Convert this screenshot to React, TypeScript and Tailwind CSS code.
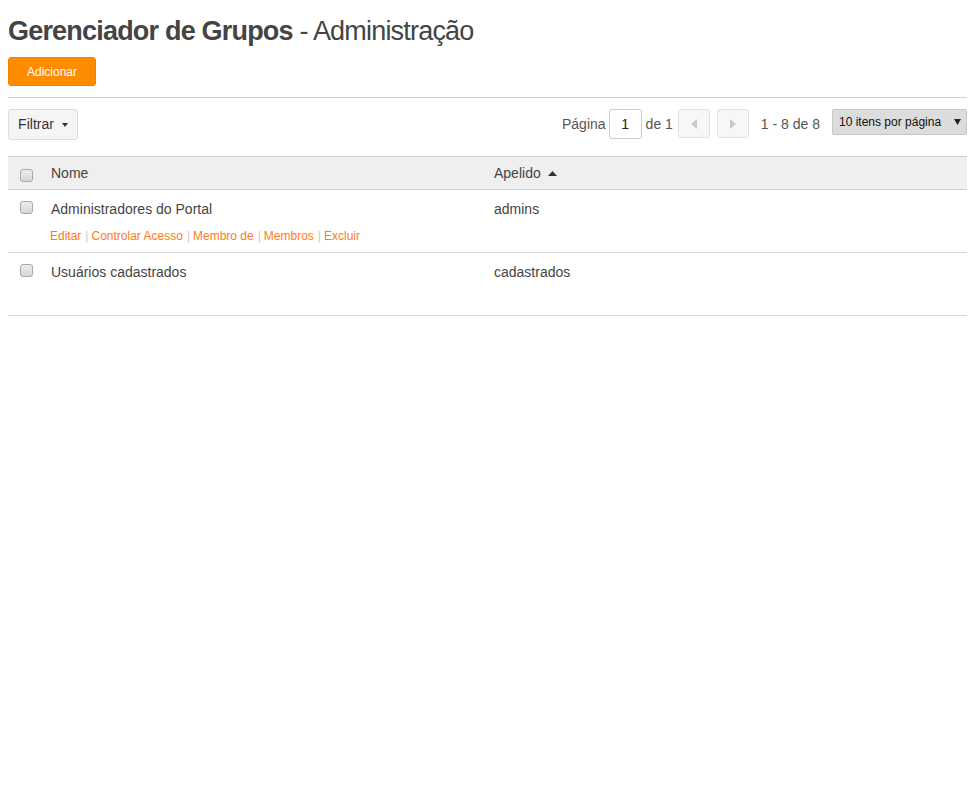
const groups = [
  { name: "Administradores do Portal", alias: "admins", actions: true },
  { name: "Usuários cadastrados", alias: "cadastrados", actions: false },
];

const actions = ["Editar", "Controlar Acesso", "Membro de", "Membros", "Excluir"];

function Checkbox({ className = "" }: { className?: string }) {
  return (
    <span
      className={`block h-[13px] w-[13px] rounded-[3px] border border-[#a9a9a9] bg-gradient-to-b from-[#ececec] to-[#d6d6d6] ${className}`}
    />
  );
}

function Caret({ dir }: { dir: "left" | "right" }) {
  return (
    <svg width="6" height="10" viewBox="0 0 6 10" className="fill-[#c8c8c8]">
      {dir === "left" ? <path d="M6 0 L0 5 L6 10 Z" /> : <path d="M0 0 L6 5 L0 10 Z" />}
    </svg>
  );
}

export default function App() {
  return (
    <div className="min-h-screen bg-white px-2 font-['Liberation_Sans',Arial,sans-serif] text-[#444]">
      <h1 className="pt-[15px] text-[27px] leading-[32px] tracking-[-0.8px] text-[#444]">
        <span className="font-bold">Gerenciador de Grupos</span> - Administração
      </h1>

      <button
        type="button"
        className="mt-[10px] h-[29px] w-[88px] rounded-[3px] border border-[#f08300] bg-[#ff8c00] text-[12px] text-white"
      >
        Adicionar
      </button>

      <div className="mt-[11px] border-t border-[#d0d0d0]" />

      <div className="mt-[11px] flex items-start justify-between">
        <button
          type="button"
          className="flex h-[31px] w-[70px] items-center justify-center gap-[8px] rounded-[3px] border border-[#dcdcdc] bg-[#f5f5f5] text-[14px] text-[#333]"
        >
          Filtrar
          <svg width="6" height="4" viewBox="0 0 6 4" className="fill-[#333]">
            <path d="M0 0 H6 L3 4 Z" />
          </svg>
        </button>

        <div className="flex items-start text-[14px] text-[#555]">
          <span className="mr-[3px] leading-[30px]">Página</span>
          <span className="flex h-[30px] w-[33px] items-center justify-center rounded-[3px] border border-[#ccc] text-[14px] text-[#222]">
            1
          </span>
          <span className="ml-[4px] leading-[30px]">de 1</span>
          <span className="ml-[5px] flex h-[29px] w-[32px] items-center justify-center rounded-[3px] border border-[#e2e2e2] bg-[#f7f7f7]">
            <Caret dir="left" />
          </span>
          <span className="ml-[7px] flex h-[29px] w-[32px] items-center justify-center rounded-[3px] border border-[#e2e2e2] bg-[#f7f7f7]">
            <Caret dir="right" />
          </span>
          <span className="ml-[12px] leading-[30px]">1 - 8 de 8</span>
          <span className="ml-[12px] flex h-[26px] w-[135px] items-center justify-between rounded-[2px] border border-[#c8c8c8] bg-[#dcdcdc] pl-[6px] pr-[5px] text-[12px] text-[#111]">
            10 itens por página
            <svg width="7" height="6" viewBox="0 0 7 6" className="fill-[#222]">
              <path d="M0 0 H7 L3.5 6 Z" />
            </svg>
          </span>
        </div>
      </div>

      <div className="mt-[16px] text-[14px] text-[#444]">
        <div className="flex h-[34px] items-center border-y border-[#cfcfcf] bg-[#efefef]">
          <div className="w-[43px] pl-[12px] pt-[4px]">
            <Checkbox />
          </div>
          <div className="w-[443px]">Nome</div>
          <div className="flex items-center gap-[7px]">
            Apelido
            <svg width="9" height="5" viewBox="0 0 9 5" className="fill-[#333]">
              <path d="M0 5 L4.5 0 L9 5 Z" />
            </svg>
          </div>
        </div>

        {groups.map((g) => (
          <div key={g.alias} className="flex h-[63px] border-b border-[#d6d6d6]">
            <div className="w-[43px] pl-[12px] pt-[11px]">
              <Checkbox />
            </div>
            <div className="w-[443px] pt-[11px]">
              <div className="leading-[17px]">{g.name}</div>
              {g.actions && (
                <div className="-ml-[1px] mt-[11px] flex text-[12px] leading-[14px] text-[#ff7a1a]">
                  {actions.map((a, i) => (
                    <span key={a} className="flex">
                      {i > 0 && <span className="ml-[4px] mr-[3px] text-[#ccc]">|</span>}
                      <span>{a}</span>
                    </span>
                  ))}
                </div>
              )}
            </div>
            <div className="pt-[11px] leading-[17px]">{g.alias}</div>
          </div>
        ))}
      </div>
    </div>
  );
}
